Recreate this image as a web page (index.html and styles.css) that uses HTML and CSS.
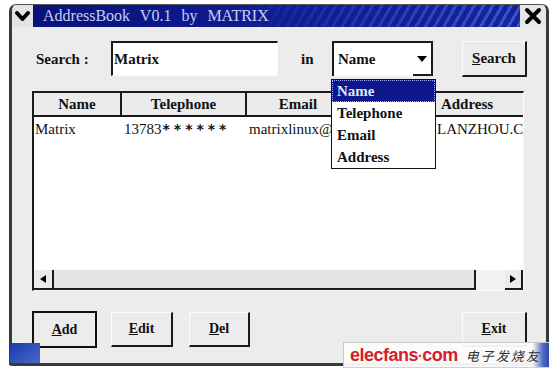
FILE: index.html
```html
<!DOCTYPE html>
<html>
<head>
<meta charset="utf-8">
<link rel="stylesheet" href="styles.css">
</head>
<body>
<div class="window">
  <div class="titlebar">
    <div class="sysbtn">
      <svg width="21" height="22" viewBox="0 0 21 22"><polyline points="5,8 10.5,14 16,8" fill="none" stroke="#000" stroke-width="4" stroke-linecap="round" stroke-linejoin="round"/></svg>
    </div>
    <div class="title"><span class="title-text">AddressBook V0.1 by MATRIX</span></div>
    <div class="closebtn">
      <svg width="26" height="22" viewBox="0 0 26 22"><path d="M7 5 L19 17 M19 5 L7 17" stroke="#000" stroke-width="4" stroke-linecap="round"/></svg>
    </div>
  </div>
  <div class="body">
    <div class="searchrow">
      <span class="lbl">Search :</span>
      <div class="input">Matrix</div>
      <span class="in">in</span>
      <div class="combo">
        <span class="combo-val">Name</span>
        <span class="combo-btn"><svg width="12" height="8" viewBox="0 0 12 8"><polygon points="1,1 11,1 6,7" fill="#000"/></svg></span>
        <ul class="dropdown">
          <li class="sel">Name</li>
          <li>Telephone</li>
          <li>Email</li>
          <li>Address</li>
        </ul>
      </div>
      <button class="btn btn-search"><u>S</u>earch</button>
    </div>
    <div class="table">
      <div class="thead">
        <div class="th">Name</div>
        <div class="th">Telephone</div>
        <div class="th">Email</div>
        <div class="th">Address</div>
      </div>
      <div class="tbody">
        <div class="tr">
          <div class="td">Matrix</div>
          <div class="td">13783<span class="stars">******</span></div>
          <div class="td">matrixlinux@</div>
          <div class="td td-addr">LANZHOU.C</div>
        </div>
      </div>
      <div class="hscroll">
        <div class="sb-btn sb-left"><svg width="6" height="8" viewBox="0 0 6 8"><polygon points="6,0 6,8 0,4" fill="#000"/></svg></div>
        <div class="sb-thumb"></div>
        <div class="sb-track"></div>
        <div class="sb-btn sb-right"><svg width="6" height="8" viewBox="0 0 6 8"><polygon points="0,0 0,8 6,4" fill="#000"/></svg></div>
      </div>
    </div>
    <div class="btnrow">
      <button class="btn btn-default"><u>A</u>dd</button>
      <button class="btn btn-edit"><u>E</u>dit</button>
      <button class="btn btn-del"><u>D</u>el</button>
      <button class="btn btn-exit"><u>E</u>xit</button>
    </div>
  </div>
</div>
<div class="corner-blue"></div>
<div class="watermark">
  <span class="wm-logo">elecfans<span class="wm-dot">·</span>com</span>
  <span class="wm-cn">电子发烧友</span>
</div>
</body>
</html>
```
FILE: styles.css
```css
html, body {
  margin: 0;
  padding: 0;
  background: #ffffff;
}

body {
  font-family: "Liberation Serif", "Times New Roman", serif;
  color: #111;
  position: relative;
  width: 557px;
  height: 375px;
  overflow: hidden;
}

.window {
  margin: 4px 0 0 9px;
  width: 540px;
  height: 362px;
  box-sizing: border-box;
  border: 3px solid #3a3a3a;
  border-top: 1px solid #555;
  border-radius: 7px 7px 3px 3px;
  background: #ececec;
  display: flex;
  flex-direction: column;
  overflow: hidden;
}

.titlebar {
  display: flex;
  height: 22px;
  flex: none;
}

.sysbtn {
  width: 21px;
  background: #e4e4e4;
  display: flex;
  align-items: center;
  justify-content: center;
}

.title {
  flex: 1;
  position: relative;
  background: linear-gradient(to right, #08127a, #0f1d92 50%, #14249c);
  padding-left: 10px;
  overflow: hidden;
}

.title::after {
  content: "";
  position: absolute;
  inset: 0;
  background: repeating-linear-gradient(120deg, rgba(0,0,0,0) 0 5px, rgba(80,110,225,0.6) 5px 8px);
  -webkit-mask-image: linear-gradient(to right, transparent 40%, #000 95%);
  mask-image: linear-gradient(to right, transparent 40%, #000 95%);
}

.title-text {
  position: relative;
  z-index: 1;
  color: #c6cef4;
  font-size: 16px;
  line-height: 22px;
  word-spacing: 6px;
  white-space: nowrap;
}

.closebtn {
  width: 26px;
  background: #e6e6e6;
  display: flex;
  align-items: center;
  justify-content: center;
}

.body {
  flex: 1;
  padding: 14px 19px 15px 20px;
  display: flex;
  flex-direction: column;
}

.searchrow {
  display: flex;
  align-items: center;
  height: 36px;
  flex: none;
}

.lbl {
  width: 79px;
  box-sizing: border-box;
  padding-left: 4px;
  font-weight: bold;
  font-size: 15px;
}

.input {
  align-self: flex-start;
  width: 167px;
  height: 35px;
  box-sizing: border-box;
  background: #fff;
  border-top: 2px solid #1a1a1a;
  border-left: 2px solid #1a1a1a;
  border-right: 1px solid #fafafa;
  border-bottom: 1px solid #fafafa;
  padding-left: 1px;
  font-size: 15px;
  font-weight: bold;
  display: flex;
  align-items: center;
}

.in {
  margin-left: 23px;
  width: 13px;
  font-weight: bold;
  font-size: 15px;
}

.combo {
  position: relative;
  align-self: flex-start;
  margin-left: 18px;
  width: 101px;
  height: 35px;
  box-sizing: border-box;
  background: #fff;
  border-top: 2px solid #1a1a1a;
  border-left: 2px solid #1a1a1a;
  display: flex;
  align-items: stretch;
}

.combo-val {
  flex: 1;
  padding-left: 4px;
  font-weight: bold;
  font-size: 15px;
  display: flex;
  align-items: center;
}

.combo-btn {
  width: 20px;
  box-sizing: border-box;
  border-right: 2px solid #1a1a1a;
  border-bottom: 2px solid #1a1a1a;
  display: flex;
  align-items: center;
  justify-content: center;
}

.dropdown {
  position: absolute;
  left: -3px;
  top: 36px;
  width: 105px;
  box-sizing: border-box;
  margin: 0;
  padding: 0;
  list-style: none;
  background: #fff;
  border: 1px solid #111;
  z-index: 5;
}

.dropdown li {
  height: 22px;
  line-height: 22px;
  padding-left: 5px;
  font-weight: bold;
  font-size: 15px;
  color: #111;
}

.dropdown li.sel {
  box-sizing: border-box;
  background: #10168c;
  color: #dfe6ff;
  border: 1px dotted #9fb0ff;
  padding-left: 4px;
  line-height: 20px;
}

.btn {
  box-sizing: border-box;
  background: #ececec;
  border-top: 1px solid #fdfdfd;
  border-left: 1px solid #fdfdfd;
  border-right: 2px solid #1a1a1a;
  border-bottom: 2px solid #1a1a1a;
  font-family: "Liberation Serif", "Times New Roman", serif;
  font-weight: bold;
  font-size: 14px;
  color: #111;
  padding: 0;
  height: 35px;
}

.btn-search {
  margin-left: 29px;
  width: 65px;
  height: 36px;
  align-self: flex-start;
  font-size: 15px;
}

.table {
  margin-top: 14px;
  width: 492px;
  height: 200px;
  box-sizing: border-box;
  border-top: 2px solid #1a1a1a;
  border-left: 2px solid #1a1a1a;
  border-right: 1px solid #fafafa;
  border-bottom: 1px solid #fafafa;
  background: #fff;
  display: flex;
  flex-direction: column;
  overflow: hidden;
  flex: none;
}

.thead, .tr {
  display: grid;
  grid-template-columns: 88px 125px 104px 234px;
}

.thead {
  height: 24px;
  flex: none;
}

.th {
  box-sizing: border-box;
  background: #ebebeb;
  border-right: 2px solid #1a1a1a;
  border-bottom: 2px solid #1a1a1a;
  text-align: center;
  font-weight: bold;
  font-size: 15px;
  line-height: 22px;
}

.tbody {
  flex: 1;
}

.tr {
  height: 22px;
  padding-top: 2px;
  line-height: 21px;
  font-size: 15px;
}

.td {
  padding-left: 2px;
  white-space: nowrap;
}

.td:first-child {
  padding-left: 1px;
}

.stars {
  font-family: "DejaVu Sans", sans-serif;
  font-size: 14px;
  font-weight: bold;
  letter-spacing: 4px;
  margin-left: 1px;
}

.td-addr {
  padding-left: 86px;
}

.hscroll {
  height: 20px;
  flex: none;
  display: flex;
  background: #e6e6e6;
}

.sb-btn {
  box-sizing: border-box;
  background: #ebebeb;
  border-right: 2px solid #1a1a1a;
  border-bottom: 2px solid #1a1a1a;
  display: flex;
  align-items: center;
  justify-content: center;
}

.sb-left {
  width: 20px;
}

.sb-right {
  width: 18px;
}

.sb-thumb {
  width: 422px;
  box-sizing: border-box;
  background: #e4e4e4;
  border-right: 2px solid #1a1a1a;
  border-bottom: 2px solid #1a1a1a;
}

.sb-track {
  flex: 1;
  background: #f2f2f2;
}

.btnrow {
  margin-top: 20px;
  height: 37px;
  display: flex;
  align-items: center;
  flex: none;
}

.btn-default {
  width: 65px;
  height: 37px;
  border: 2px solid #111;
}

.btn-edit {
  margin-left: 14px;
  width: 62px;
}

.btn-del {
  margin-left: 16px;
  width: 61px;
}

.btn-exit {
  margin-left: auto;
  width: 65px;
}

.corner-blue {
  position: absolute;
  left: 10px;
  top: 343px;
  width: 30px;
  height: 20px;
  background: linear-gradient(to bottom right, #1c3aa8, #4a68c8);
}

.watermark {
  position: absolute;
  left: 343px;
  top: 342px;
  width: 206px;
  height: 26px;
  box-sizing: border-box;
  border-top: 1px solid #c8c8c8;
  border-left: 1px solid #c8c8c8;
  border-bottom: 1px solid #d0d0d0;
  background: linear-gradient(to right, rgba(252,252,252,0.95) 92%, #4f6cc4 97%, #2a48b0);
  display: flex;
  align-items: center;
  padding-left: 6px;
  white-space: nowrap;
}

.wm-logo {
  font-family: "Liberation Sans", Arial, sans-serif;
  font-weight: bold;
  font-size: 18px;
  letter-spacing: -0.5px;
  color: #d41e2c;
  line-height: 1;
}

.wm-dot {
  font-size: 14px;
}

.wm-cn {
  margin-left: 8px;
  font-family: "Noto Sans CJK SC", sans-serif;
  font-size: 13px;
  font-style: italic;
  letter-spacing: 2px;
  color: #333;
  white-space: nowrap;
}
```
